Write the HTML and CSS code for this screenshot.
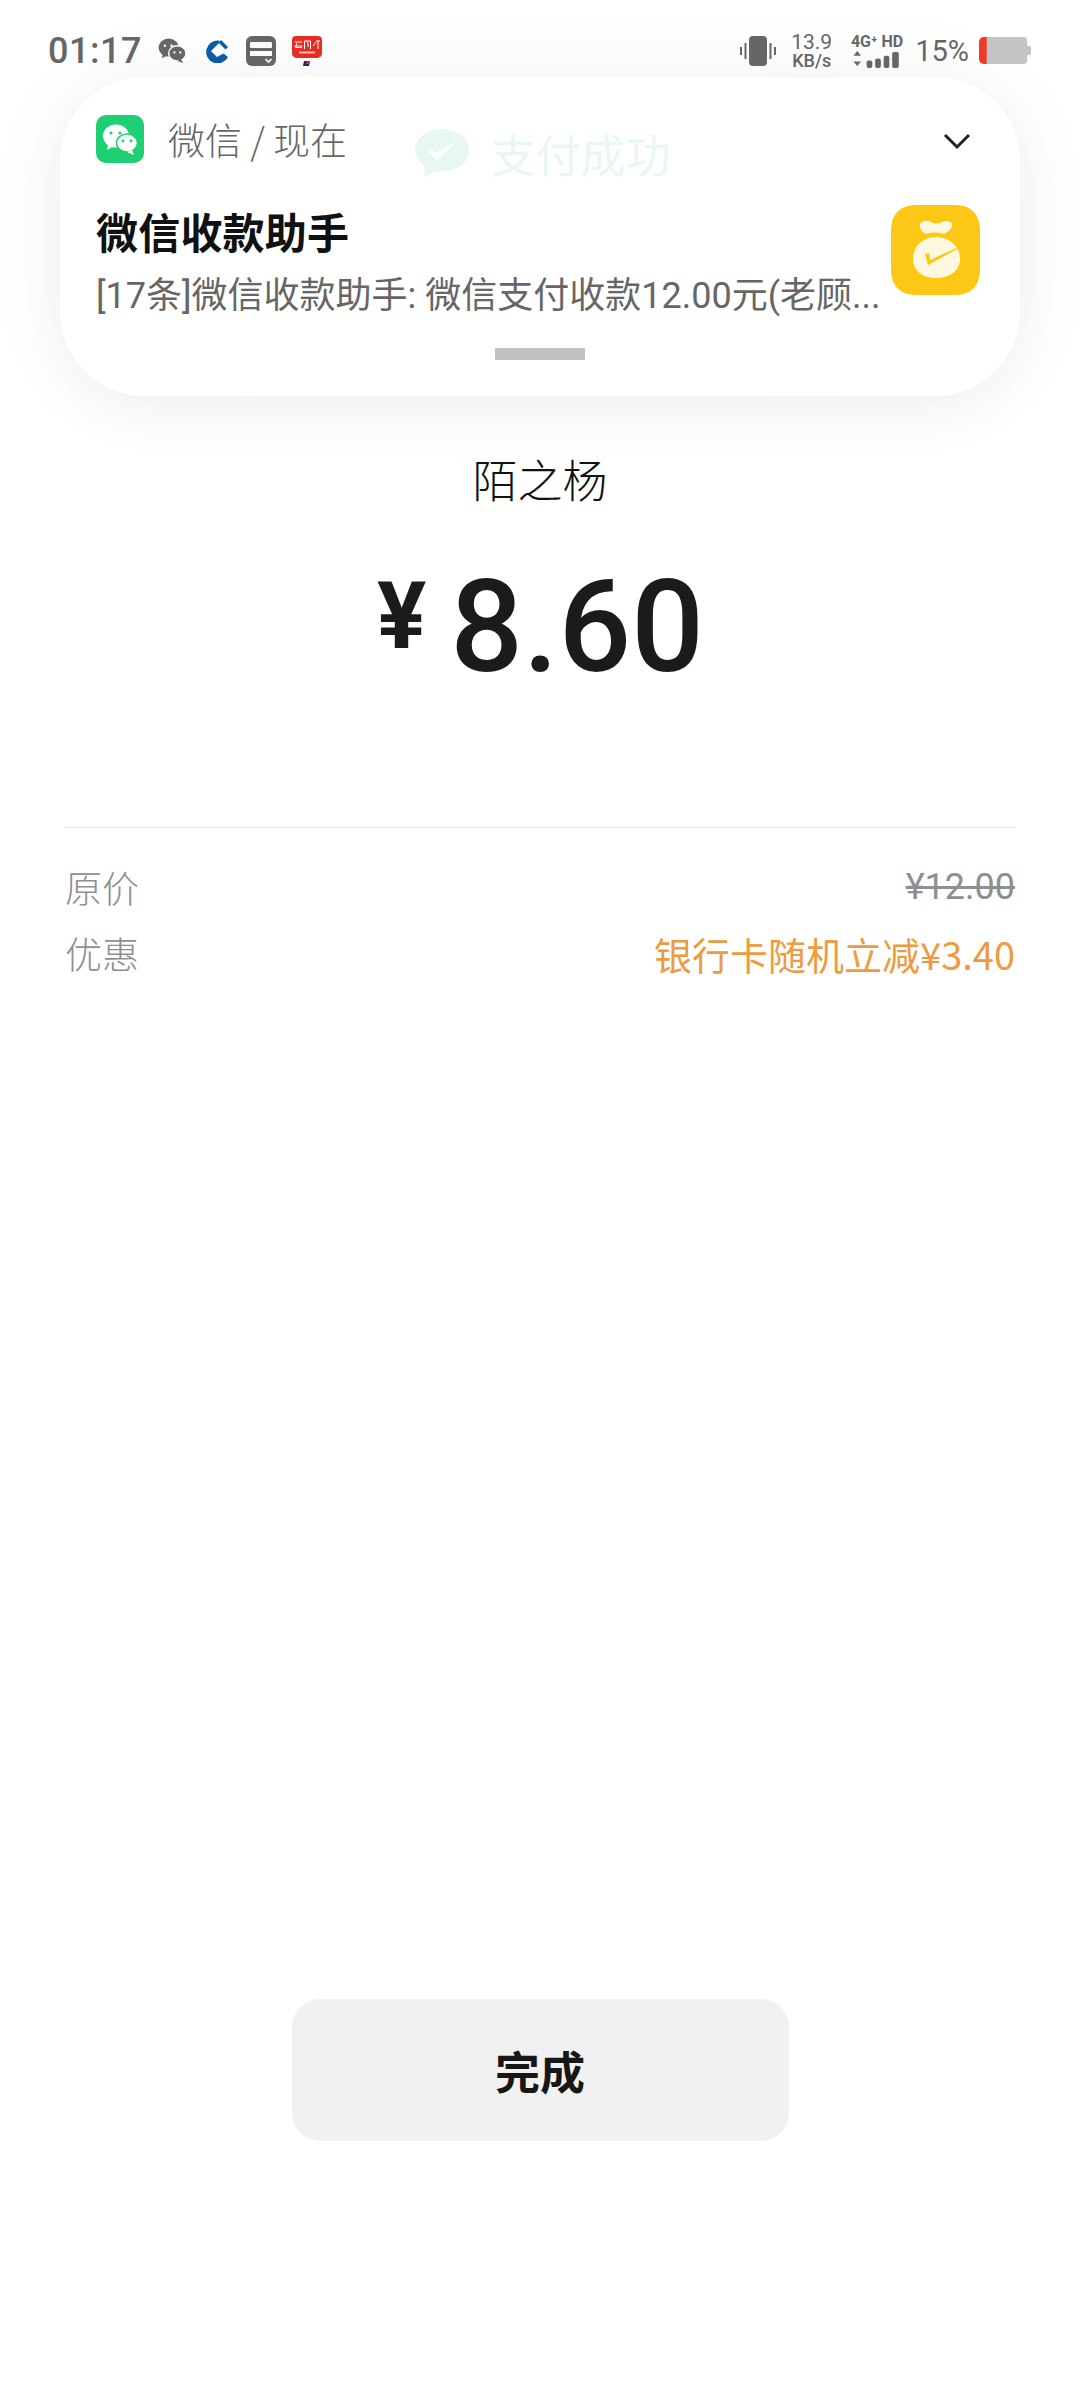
FILE: index.html
```html
<!DOCTYPE html>
<html lang="zh">
<head>
<meta charset="utf-8">
<title>支付成功</title>
<link rel="stylesheet" href="styles.css">
</head>
<body>
<div class="page">
  <main class="content">
    <div class="ghost">
      <svg class="ghost-icon" viewBox="0 0 54 48"><path d="M27 0C12 0 0 9.500 0 21c0 6.500 3.800 12.300 9.800 16.200L9 48l11.500-6c2.100.400 4.300.600 6.500.600 15 0 27-9.500 27-21.300S42 0 27 0z" fill="#19af73"/><path d="M13 22l3-2 5 4 21-12-20 19z" fill="#fff"/></svg>
      <span>支付成功</span>
    </div>
    <div class="payee">陌之杨</div>
    <div class="amount"><span class="currency">¥</span><span class="value">8.60</span></div>
    <div class="details">
      <div class="row"><span class="label">原价</span><span class="original">¥12.00</span></div>
      <div class="row"><span class="label">优惠</span><span class="discount">银行卡随机立减¥3.40</span></div>
    </div>
    <div class="done">完成</div>
  </main>

  <div class="overlay">
    <header class="status">
      <div class="status-left">
        <span class="time">01:17</span>
        <svg class="ic-wechat" viewBox="0 0 30 26"><ellipse cx="11" cy="10" rx="10.500" ry="9.500" fill="#666"/><path d="M5 16l-1 5 6-3z" fill="#666"/><ellipse cx="20" cy="16" rx="9" ry="8" fill="#666" stroke="#fafafa" stroke-width="1.500"/><path d="M24 22l2 4-6-2z" fill="#666"/><circle cx="7" cy="8" r="1.300" fill="#fafafa"/><circle cx="14" cy="8" r="1.300" fill="#fafafa"/><circle cx="17" cy="15" r="1.200" fill="#fafafa"/><circle cx="23" cy="15" r="1.200" fill="#fafafa"/></svg>
        <svg class="ic-ccb" viewBox="0 0 24 24"><path d="M14 1.500A11.500 11.500 0 1 0 23 18l-4.500-3.500-6.500 3.500-6-6 7-7 1.500-1z" fill="#0a5ca8"/><path d="M12 8l4 4-4 4-4-4z" fill="#fff"/><path d="M16 1l7 7-2.500 2.500-7-7z" fill="#0a5ca8"/></svg>
        <svg class="ic-card" viewBox="0 0 30 30"><rect width="30" height="30" rx="6" fill="#666"/><rect x="4" y="6" width="22" height="6" rx="1" fill="#fafafa"/><path d="M4 15h22v5H4z" fill="#fafafa"/><path d="M19.500 23l3 3 3-3" fill="none" stroke="#fff" stroke-width="1.600"/></svg>
        <svg class="ic-pay" viewBox="0 0 30 30"><path d="M4 0h22a4 4 0 0 1 4 4v13a5 5 0 0 1-4 5H4a5 5 0 0 1-4-5V4a4 4 0 0 1 4-4z" fill="#e52d24"/><path d="M3 6h7M2.500 10h8M5 7l-1.500 4.500h6.500M12.500 5v8M12.500 5h6v8M15.500 6l1 5M21 10l3-4M24 5h4M26 5v8" stroke="#fff" stroke-width="1" fill="none"/><rect x="7" y="15.500" width="16" height="2" fill="#f7b5b0"/><path d="M12 25h6l-1 5h-6z" fill="#1d2f5c"/><path d="M15 25h3l-1 3h-3z" fill="#c8304a"/></svg>
      </div>
      <div class="status-right">
        <svg class="ic-vib" viewBox="0 0 36 30"><rect x="9" y="0" width="18" height="30" rx="4" fill="#666"/><path d="M5.500 7v16M30.500 7v16" stroke="#666" stroke-width="2"/><path d="M1 11v8M35 11v8" stroke="#666" stroke-width="2"/></svg>
        <div class="speed"><span>13.9</span><span class="speed-unit">KB/s</span></div>
        <div class="net">
          <span class="net-top">4G⁺ HD</span>
          <svg class="ic-signal" viewBox="0 0 52 18"><path d="M4 0l4 5H0zM4 16l4-5H0z" fill="#666"/><rect x="14" y="10" width="6" height="8" rx="2" fill="#666"/><rect x="23" y="8" width="6" height="10" rx="2" fill="#666"/><rect x="32" y="5" width="6" height="13" rx="2" fill="#666"/><rect x="41" y="1" width="7" height="17" rx="2" fill="#666"/></svg>
        </div>
        <span class="pct">15%</span>
        <svg class="ic-batt" viewBox="0 0 54 28"><path d="M7 0h39a4 4 0 0 1 4 4v5h1.500a2.500 2.500 0 0 1 2.500 2.500v5a2.500 2.500 0 0 1-2.500 2.500H50v5a4 4 0 0 1-4 4H7z" fill="#c4c4c4"/><path d="M8 0H5a5 5 0 0 0-5 5v18a5 5 0 0 0 5 5h3z" fill="#f0392b"/></svg>
      </div>
    </header>

    <section class="notice">
      <div class="notice-head">
        <svg class="app-icon" viewBox="0 0 48 48"><rect width="48" height="48" rx="10" fill="#1fcf74"/><ellipse cx="20" cy="21" rx="13" ry="11.500" fill="#fff"/><path d="M12 29l-1 6 7-4z" fill="#fff"/><ellipse cx="31" cy="28" rx="10.500" ry="9" fill="#fff" stroke="#1fcf74" stroke-width="1.500"/><path d="M36 35l2 5-7-3z" fill="#fff"/><circle cx="15" cy="18" r="1.600" fill="#1fcf74"/><circle cx="24" cy="18" r="1.600" fill="#1fcf74"/><circle cx="27" cy="26" r="1.400" fill="#1fcf74"/><circle cx="35" cy="26" r="1.400" fill="#1fcf74"/></svg>
        <span class="notice-src">微信 / 现在</span>
        <svg class="chevron" viewBox="0 0 28 18"><path d="M2 3l12 12L26 3" fill="none" stroke="#222" stroke-width="3"/></svg>
      </div>
      <div class="notice-body">
        <div class="notice-text">
          <div class="notice-title">微信收款助手</div>
          <div class="notice-msg">[17条]微信收款助手: 微信支付收款12.00元(老顾...</div>
        </div>
        <svg class="bag" viewBox="0 0 89 90"><path d="M26 0h37c18 0 26 10 26 26v38c0 16-8 26-26 26H26C8 90 0 80 0 64V26C0 10 8 0 26 0z" fill="#fdc815"/><path d="M29 19c2-4 7-4 11-2 4 2 7 2 11 0 5-2 10-1 10 3 0 4-4 7-8 9-6-2-13-2-18 0-4-2-7-6-6-10z" fill="#fff8e0"/><path d="M45 32c14 0 24 10 24 22 0 12-11 19-24 19S22 66 22 54c0-12 9-22 23-22z" fill="#fff8e0"/><path d="M34 49l3 11 29-16-1-1-26 12-1-7z" fill="#fdc815"/></svg>
      </div>
      <div class="handle"></div>
    </section>
  </div>
</div>
</body>
</html>
```

FILE: styles.css
```css
* { box-sizing: border-box; }
html, body { margin: 0; padding: 0; background: #fff; }
body { font-family: Roboto, "Noto Sans CJK SC", sans-serif; }

.page {
  position: relative;
  width: 1080px;
  height: 2400px;
  overflow: hidden;
  background: #fff;
}

.content {
  display: flex;
  flex-direction: column;
  align-items: center;
  height: 2400px;
  padding-top: 129px;
}

.ghost {
  display: flex;
  align-items: center;
  gap: 21px;
  height: 48px;
  margin-left: 6px;
  color: #19af73;
  font-size: 45px;
  font-weight: 400;
  font-family: "Noto Sans CJK SC", sans-serif;
}
.ghost-icon { width: 54px; height: 48px; }

.payee {
  margin-top: 269px;
  height: 66px;
  line-height: 66px;
  color: #111;
  font-size: 45px;
  font-weight: 300;
  font-family: "Noto Sans CJK SC", sans-serif;
}

.amount {
  display: flex;
  align-items: flex-start;
  gap: 24px;
  margin-top: 50px;
  margin-left: 1px;
  height: 130px;
  color: #1b1b1b;
}
.currency {
  margin-top: 5px;
  font-size: 92px;
  font-weight: 700;
  line-height: 100px;
}
.value {
  font-size: 128px;
  font-weight: 500;
  line-height: 130px;
}

.details {
  width: 950px;
  margin-top: 135px;
  padding-top: 34px;
  border-top: 1px solid #e6e6e6;
  display: flex;
  flex-direction: column;
  gap: 16px;
}
.row {
  display: flex;
  justify-content: space-between;
  align-items: center;
  height: 50px;
  font-family: "Noto Sans CJK SC", sans-serif;
  font-size: 37px;
  font-weight: 300;
}
.label { color: #8f8f8f; }
.original { color: #8f8f8f; text-decoration: line-through; font-family: Roboto, sans-serif; font-size: 36px; font-weight: 400; }
.discount { color: #ee9b3f; font-weight: 400; font-size: 38px; }

.done {
  margin-top: auto;
  margin-bottom: 259px;
  width: 497px;
  height: 142px;
  display: flex;
  align-items: center;
  justify-content: center;
  background: #f1f1f1;
  border-radius: 28px;
  color: #171717;
  font-size: 45px;
  font-weight: 700;
}

.overlay {
  position: absolute;
  inset: 0 0 auto 0;
}

.status {
  display: flex;
  justify-content: space-between;
  align-items: center;
  height: 77px;
  padding: 24px 49px 0 48px;
  color: #666;
}
.status-left, .status-right { display: flex; align-items: center; }
.time { font-size: 36px; font-weight: 500; letter-spacing: 0.5px; }
.ic-wechat { width: 29px; height: 25px; margin-left: 16px; }
.ic-ccb { width: 24px; height: 24px; margin-left: 18px; }
.ic-card { width: 30px; height: 30px; margin-left: 17px; }
.ic-pay { width: 30px; height: 30px; margin-left: 16px; }

.ic-vib { width: 36px; height: 30px; margin-right: 1px; }
.speed {
  display: flex;
  flex-direction: column;
  align-items: center;
  margin-left: 14px;
  font-size: 21px;
  line-height: 19px;
}
.speed-unit { font-size: 18px; font-weight: 500; line-height: 17px; }
.net {
  display: flex;
  flex-direction: column;
  align-items: flex-end;
  margin-left: 13px;
  width: 58px;
}
.net-top { font-size: 16px; font-weight: 700; line-height: 18px; white-space: nowrap; }
.ic-signal { width: 50px; height: 17px; }
.pct { font-size: 29px; margin-left: 12px; }
.ic-batt { width: 52px; height: 27px; margin-left: 10px; }

.notice {
  width: 960px;
  height: 319px;
  margin-left: 60px;
  padding: 38px 40px 0 36px;
  background: rgba(255, 255, 255, 0.9);
  border-radius: 84px;
  box-shadow: 0 10px 60px rgba(0, 0, 0, 0.05), 0 0 110px rgba(0, 0, 0, 0.03);
}
.notice-head { display: flex; align-items: center; height: 48px; }
.app-icon { width: 48px; height: 48px; }
.notice-src {
  margin-left: 24px;
  color: #666;
  font-size: 37px;
  font-weight: 300;
  font-family: "Noto Sans CJK SC", sans-serif;
}
.chevron { width: 28px; height: 18px; margin: 4px 9px 0 auto; }
.notice-body {
  display: flex;
  justify-content: space-between;
  align-items: flex-start;
  margin-top: 42px;
}
.notice-text { width: 790px; }
.notice-title {
  height: 60px;
  line-height: 60px;
  color: #111;
  font-size: 42px;
  font-weight: 700;
  letter-spacing: 0.2px;
}
.notice-msg {
  height: 54px;
  line-height: 54px;
  margin-top: 4px;
  color: #666;
  font-size: 36px;
  white-space: nowrap;
  font-weight: 400;
}
.bag { width: 89px; height: 90px; }
.handle {
  width: 90px;
  height: 12px;
  margin: 25px 0 0 399px;
  background: #c2c2c2;
}
```
